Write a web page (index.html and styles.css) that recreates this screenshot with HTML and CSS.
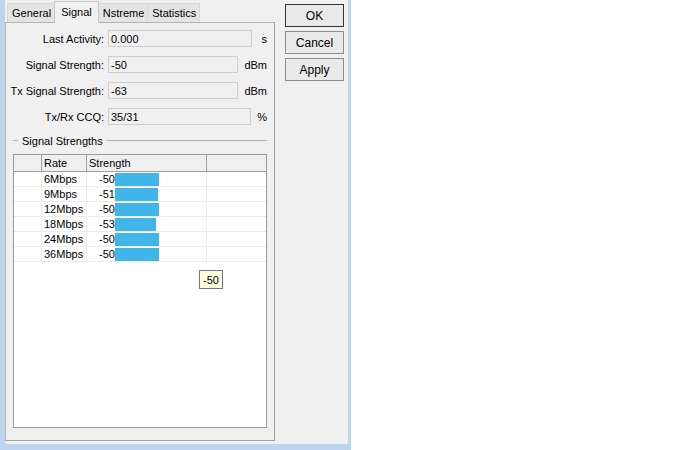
FILE: index.html
```html
<!DOCTYPE html>
<html>
<head>
	<meta charset="utf-8" />
	<link rel="stylesheet" href="styles.css">
</head>
<body>
<div id="window">
	<div id="main">
		<div id="tabs">
			<div class="tab">General</div>
			<div class="tab selected">Signal</div>
			<div class="tab">Nstreme</div>
			<div class="tab">Statistics</div>
		</div>
		<div id="panel">
			<div class="row">
				<div class="label">Last Activity:</div>
				<div class="field">0.000</div>
				<div class="unit">s</div>
			</div>
			<div class="row">
				<div class="label">Signal Strength:</div>
				<div class="field">-50</div>
				<div class="unit">dBm</div>
			</div>
			<div class="row">
				<div class="label">Tx Signal Strength:</div>
				<div class="field">-63</div>
				<div class="unit">dBm</div>
			</div>
			<div class="row">
				<div class="label">Tx/Rx CCQ:</div>
				<div class="field">35/31</div>
				<div class="unit">%</div>
			</div>

			<div class="group">
				<span class="dash"></span>
				<span class="group_title">Signal Strengths</span>
				<span class="line"></span>
			</div>

			<div id="list">
				<div class="list_row head">
					<div class="cell"></div>
					<div class="cell">Rate</div>
					<div class="cell">Strength</div>
					<div class="cell"></div>
				</div>
				<div id="list_body"></div>
				<div class="tooltip">-50</div>
			</div>
		</div>
	</div>
	<div id="buttons">
		<button type="button" class="dlg_btn default">OK</button>
		<button type="button" class="dlg_btn">Cancel</button>
		<button type="button" class="dlg_btn">Apply</button>
	</div>
</div>
<script>
var rates = [
	["6Mbps", -50],
	["9Mbps", -51],
	["12Mbps", -50],
	["18Mbps", -53],
	["24Mbps", -50],
	["36Mbps", -50]
];

var body = document.getElementById("list_body");

for (var i = 0; i < rates.length; i++) {
	var row = document.createElement("div");
	row.className = "list_row";
	//bar grows with the signal, -50 is about 44px
	var w = Math.round((100 + rates[i][1]) * 0.88);
	row.innerHTML = '<div class="cell"></div>' +
		'<div class="cell">' + rates[i][0] + '</div>' +
		'<div class="cell strength"><span class="num">' + rates[i][1] + '</span>' +
		'<span class="bar" style="width:' + w + 'px"></span></div>' +
		'<div class="cell"></div>';
	body.appendChild(row);
}
</script>
</body>
</html>
```

FILE: styles.css
```css
body {
	margin: 0;
	background-color: white;
	font-family: "Liberation Sans", Arial, sans-serif;
	font-size: 11px;
	color: #000;
}

#window {
	width: 351px;
	height: 450px;
	box-sizing: border-box;
	background-color: #f0f0f0;
	border-left: 5px solid #bcd4ed;
	border-right: 3px solid #bcd4ed;
	border-bottom: 6px solid #bcd4ed;
	display: flex;
}

#main {
	width: 270px;
	display: flex;
	flex-direction: column;
	padding-bottom: 3px;
}

#tabs {
	height: 22px;
	display: flex;
	align-items: flex-end;
	padding-left: 2px;
}

.tab {
	height: 18px;
	line-height: 18px;
	padding: 0 3px 0 4px;
	border: 1px solid #d9d9d9;
	border-bottom: none;
	background-color: #e4e4e4;
	margin-right: -1px;
}

.tab.selected {
	height: 21px;
	line-height: 20px;
	padding: 0 6px;
	background-color: #f0f0f0;
	border-color: #c8c8c8;
	margin-bottom: -1px;
	position: relative;
	z-index: 1;
}

#panel {
	flex: 1;
	border: 1px solid #b4b4b4;
	border-right-color: #a0a0a0;
	border-bottom-color: #a0a0a0;
	padding: 7px 7px 12px 7px;
	display: flex;
	flex-direction: column;
}

.row {
	display: flex;
	height: 17px;
	align-items: center;
	margin-bottom: 9px;
}

.label {
	width: 91px;
	flex-shrink: 0;
	display: flex;
	justify-content: flex-end;
	white-space: nowrap;
	margin-right: 4px;
}

.field {
	flex: 1;
	height: 17px;
	line-height: 16px;
	box-sizing: border-box;
	border: 1px solid #cfcfcf;
	padding-left: 2px;
}

.unit {
	min-width: 9px;
	margin-left: 6px;
	text-align: right;
}

.group {
	display: flex;
	align-items: center;
	height: 13px;
	margin-bottom: 7px;
}

.dash {
	width: 5px;
	border-top: 1px solid #b0b0b0;
}

.group_title {
	padding: 0 4px;
}

.line {
	flex: 1;
	border-top: 1px solid #b0b0b0;
}

#list {
	flex: 1;
	position: relative;
	background-color: white;
	border: 1px solid #9a9a9a;
}

.list_row {
	display: grid;
	grid-template-columns: 28px 45px 120px 1fr;
	height: 15px;
	border-bottom: 1px solid #ececec;
	box-sizing: border-box;
}

.list_row .cell {
	border-right: 1px solid #ececec;
	padding-left: 2px;
	line-height: 14px;
	white-space: nowrap;
	display: flex;
	align-items: center;
}

.list_row .cell:last-child {
	border-right: none;
}

.list_row.head {
	height: 17px;
	background-color: #f0f0f0;
	border-bottom: 1px solid #a0a0a0;
}

.list_row.head .cell {
	border-right-color: #a0a0a0;
	line-height: 16px;
}

.list_row.head .cell:last-child {
	border-right: none;
}

.strength {
	padding-left: 0 !important;
}

.num {
	width: 28px;
	text-align: right;
	flex-shrink: 0;
}

.bar {
	display: block;
	height: 13px;
	background-color: #3fb5e9;
}

.tooltip {
	position: absolute;
	left: 185px;
	top: 115px;
	height: 19px;
	line-height: 18px;
	box-sizing: border-box;
	padding: 0 3px;
	background-color: #ffffe1;
	border: 1px solid #767676;
}

#buttons {
	margin-left: 10px;
	padding-top: 4px;
	display: flex;
	flex-direction: column;
	gap: 4px;
}

.dlg_btn {
	width: 59px;
	height: 23px;
	font-family: "Liberation Sans", Arial, sans-serif;
	font-size: 12px;
	background-color: #e9e9e9;
	border: 1px solid #8e8e8e;
	padding: 0;
	color: #000;
}

.dlg_btn.default {
	border-color: #333;
}
```
